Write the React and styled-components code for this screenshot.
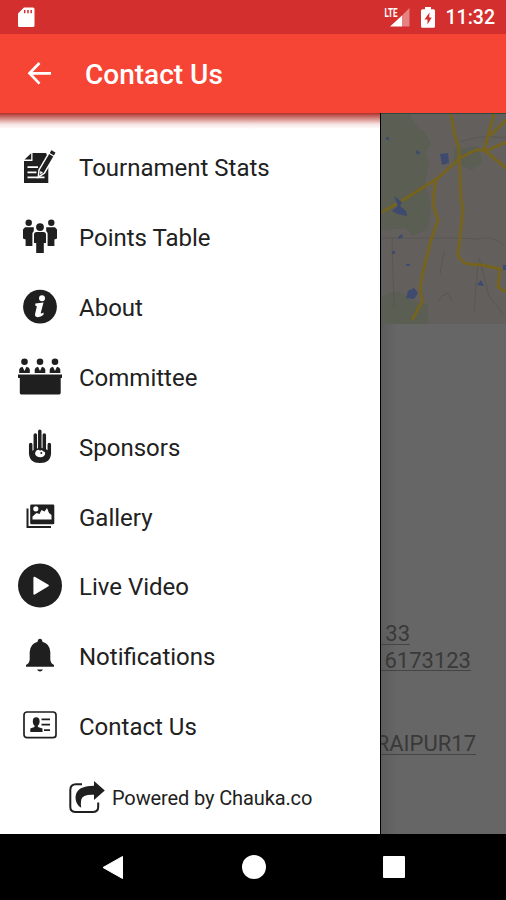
import React from "react";
import styled, { createGlobalStyle } from "styled-components";

const GlobalStyle = createGlobalStyle`
  * {
    box-sizing: border-box;
  }
  body {
    margin: 0;
    background: #000;
    font-family: Roboto, "Noto Sans", sans-serif;
  }
`;

const StatsIcon = () => (
  <svg viewBox="0 0 44 44">
    <path d="M14.500 8H28l2.300 5V38H6V16h8.500z" />
    <path d="M6.500 14.500l6.700-6.300v6.300z" />
    <path d="M9.500 22.200h10.500M9.500 27.300h9M9.500 32.300h17" stroke="#fff" strokeWidth="1.800" />
    <path
      d="M33.200 4.200l5.300 3.200-12 20.600-6.200 4.200.700-7.300z"
      stroke="#fff"
      strokeWidth="1.500"
    />
    <path d="M31 8.300l5.400 3.200" stroke="#fff" strokeWidth="1.200" />
    <path d="M22.300 26l2.700 1.600-3 2z" fill="#fff" />
  </svg>
);

const PeopleIcon = () => (
  <svg viewBox="0 0 44 44">
    <circle cx="10.700" cy="7.800" r="3.200" />
    <circle cx="33.300" cy="7.800" r="3.200" />
    <path d="M7 12.300h8.800v3.700l-1.400 2V31H7.600V24.500L5 23.500V14.500z" />
    <path d="M37 12.300h-8.800v3.700l1.400 2V31h6.800V24.500l2.600-1V14.500z" />
    <circle cx="22" cy="12.100" r="3.900" />
    <path d="M18.500 17h7q2.500 0 2.500 2.500V28h-2.200v10h-7.600V28H16v-8.500q0-2.500 2.500-2.500z" />
  </svg>
);

const InfoIcon = () => (
  <svg viewBox="0 0 44 44">
    <circle cx="22" cy="21.700" r="16.900" />
    <circle cx="24" cy="13.200" r="3" fill="#fff" />
    <path
      d="M17.300 18.400l8.200-.8-2.700 10.200q-.3 1.700 2.700-.2v2.200q-2.700 2.500-5.900 2.400-3.100-.2-2.500-3.400l1.700-7.100q.2-1-1.500-1z"
      fill="#fff"
    />
  </svg>
);

const CommitteeIcon = () => (
  <svg viewBox="0 0 44 44">
    {[6.5, 22, 37].map((x) => (
      <g key={x} transform={`translate(${x} 0)`}>
        <circle cx="0" cy="6.800" r="3.300" />
        <path d="M-5.300 18v-3.500q.3-2 3.300-2.800L0 16l2-4.300q3 .8 3.300 2.800V18z" />
      </g>
    ))}
    <path d="M0 19.600h44v3.400h-1.300V38q0 1.400-1.400 1.400H3.200Q1.800 39.400 1.800 38V23H0z" />
  </svg>
);

const HandIcon = () => (
  <svg viewBox="0 0 44 44">
    <path
      d="M12.700 19.500v9M17.300 10v18M21.800 6.200v20M26.300 10v18M31.300 19.500v9"
      fill="none"
      stroke="#1f1f1f"
      strokeWidth="3.500"
      strokeLinecap="round"
    />
    <path d="M11 27l5-2 5.600-2.500 6 1.500 5.400 3v1q0 10-11 10T11 28z" />
    <path d="M17 28.500q.5-3.500 4-3.800 1 1.600 2.500.2l3.700 2.600q0 4.600-5 4.800-4.200 0-5.200-3.800z" fill="#fff" />
    <circle cx="23.300" cy="28" r="1" />
  </svg>
);

const GalleryIcon = () => (
  <svg viewBox="0 0 44 44">
    <path d="M13.500 9.400H35q1.300 0 1.300 1.300V28q0 1.300-1.300 1.300H13.500q-1.300 0-1.300-1.300V10.700q0-1.300 1.300-1.300z" />
    <path d="M9.500 13.500V32H33" fill="none" stroke="#1f1f1f" strokeWidth="2" />
    <circle cx="17.800" cy="13.800" r="2.600" fill="#fff" />
    <path d="M14.500 24.500v-3l4-3.500 3 1 2-4 3 1.500 2.500-3.500 2 5 2.500 2v4.500z" fill="#fff" />
  </svg>
);

const PlayIcon = () => (
  <svg viewBox="0 0 44 44">
    <circle cx="22" cy="21.500" r="22" />
    <path
      d="M16.300 13.600v16.200L30 21.600z"
      fill="#fff"
      stroke="#fff"
      strokeWidth="1.800"
      strokeLinejoin="round"
    />
  </svg>
);

const BellIcon = () => (
  <svg viewBox="0 0 44 44">
    <path d="M22 4.800q2.200 0 2.400 3Q32 10 32.300 18v7.500q.3 4 3.700 5.500v1.800H8V31q3.400-1.500 3.700-5.500V18Q12 10 19.600 7.800q.2-3 2.400-3z" />
    <path d="M19 35.500h6q-1 2-3 2t-3-2z" />
  </svg>
);

const ContactIcon = () => (
  <svg viewBox="0 0 44 44">
    <rect
      x="6"
      y="8"
      width="32"
      height="25.700"
      rx="3"
      fill="none"
      stroke="#1f1f1f"
      strokeWidth="1.700"
    />
    <ellipse cx="18.200" cy="17.500" rx="3.400" ry="4.200" />
    <path d="M16.500 20h3.400v3l4.600 1.600V28H12.300v-3.400l4.200-1.600z" />
    <path d="M23.500 15.300h8.500M23.500 20.700h8.500M26 26.200h6" stroke="#1f1f1f" strokeWidth="1.800" />
  </svg>
);

const ShareIcon = () => (
  <svg width="36" height="34" viewBox="0 0 36 34" fill="#1f1f1f">
    <path
      d="M13 3.200H7Q1.300 3.200 1.300 9v17q0 5 5.700 5h16.500q5.700 0 5.700-5v-4.500"
      fill="none"
      stroke="#1f1f1f"
      strokeWidth="2"
    />
    <path d="M25 0l10.800 9.600L25 19v-5.200q-11.500-.6-12.800 5-.7 4 0 8Q6.300 23.500 6.500 16 7 4.800 25 4.700z" />
  </svg>
);

const RoadMap = () => (
  <svg width="124" height="210" viewBox="0 0 124 210">
    <rect width="124" height="210" fill="#625f5d" />
    <g fill="#5a5e53">
      <path d="M0 0h28q3 12 15 18l6 12-6 8 4 12-4 18 6 24-4 24-14 6-8-8-24 2z" />
      <path d="M0 184q14-14 28 2l18 4v20H0z" />
      <path d="M72 36l24-4 4 16-10 8-18-8z" />
    </g>
    <g fill="none" stroke="#595754" strokeWidth="1">
      <path d="M0 124h76l20 1q14-4 26 6M56 188l4-6 6-3 4 8M62 138l-4 22M97 144l10 38 14 18M96 148l-4 50M10 124l2 70M78 28q20-8 46-4" />
    </g>
    <g fill="none" stroke="#76641e" strokeWidth="3" strokeLinejoin="round">
      <path d="M0 98l18-10 38-24 22-20 16-8h12l18-8" />
      <path d="M69 0l4 22 4 12v10l1 18 1 24 2 8-4 40-1 6q2 8 10 10l14 1 18 4-2 18 8 5" />
      <path d="M54 64l-3 26 5 16-7 20-8 32-3 16 2 14-10 18" />
      <path d="M112 0l-10 36 22 18M124 6l-16 16" />
    </g>
    <g fill="#3e4a6e">
      <path d="M58 40l8-1 1 10-7 2z" />
      <path d="M12 82l8 6-2 4 6 5 1 5-9-2-6-3 6-5z" />
      <path d="M26 177l6-3 4 5-4 6-8-1z" />
      <path d="M95 171l4-5 3 6zM16 123l4-3 1 3-4 2zM34 36l4 2-1 3-3-2zM10 137h3v3h-3zM24 150h4v2h-4zM121 151h3v5h-3zM4 23h3v3H4z" />
    </g>
  </svg>
);

const menu = [
  { label: "Tournament Stats", icon: StatsIcon },
  { label: "Points Table", icon: PeopleIcon },
  { label: "About", icon: InfoIcon },
  { label: "Committee", icon: CommitteeIcon },
  { label: "Sponsors", icon: HandIcon },
  { label: "Gallery", icon: GalleryIcon },
  { label: "Live Video", icon: PlayIcon },
  { label: "Notifications", icon: BellIcon },
  { label: "Contact Us", icon: ContactIcon },
];

const App = () => {
  return (
    <Screen>
      <GlobalStyle />
      <StatusBar>
        <svg width="17" height="21" viewBox="0 0 17 21">
          <path d="M6 .5h9q1.500 0 1.500 1.500v16.500q0 1.500-1.500 1.500H1.500Q0 20 0 18.500V6.500z" fill="#fff" />
          <path d="M6.700 3v3.200M10 3v3.200M13.200 3v3.200" stroke="#d32f2f" strokeWidth="1.500" />
        </svg>
        <StatusIcons>
          <svg width="26" height="22" viewBox="0 0 26 22">
            <path d="M25.500 2v18.500h-8V10z" fill="#e58282" />
            <path d="M18 9.500v11H6z" fill="#fff" />
            <text x="0.500" y="10.500" textLength="13" lengthAdjust="spacingAndGlyphs" className="lte">
              LTE
            </text>
          </svg>
          <svg width="14" height="21" viewBox="0 0 14 21">
            <path d="M4 0h6v2.300h2.500Q14 2.300 14 3.800v15.500q0 1.500-1.500 1.500h-11Q0 20.800 0 19.300V3.800q0-1.500 1.500-1.500H4z" fill="#fff" />
            <path d="M8.500 5.500L3.500 12.500h3v5l4.300-7H8.200z" fill="#d32f2f" />
          </svg>
          <Clock>11:32</Clock>
        </StatusIcons>
      </StatusBar>
      <AppBar>
        <svg width="24" height="24" viewBox="0 0 24 24">
          <path d="M12.500 1L2.500 11.300l10 10.300M3 11.300h21" fill="none" stroke="#fff" strokeWidth="2.700" />
        </svg>
        <Title>Contact Us</Title>
      </AppBar>
      <Body>
        <Drawer>
          {menu.map(({ label, icon: Icon }) => (
            <MenuItem key={label}>
              <Icon />
              <Label>{label}</Label>
            </MenuItem>
          ))}
          <Footer>
            <ShareIcon />
            <span>Powered by Chauka.co</span>
          </Footer>
        </Drawer>
        <Page>
          <RoadMap />
          <Details>
            <Line $right={96}>33</Line>
            <Line $right={35}>6173123</Line>
            <Line $right={30} $top={57}>
              RAIPUR17
            </Line>
          </Details>
        </Page>
      </Body>
      <NavBar>
        <svg width="22" height="25" viewBox="0 0 22 25">
          <path d="M20.500 1.500v22L1 12.500z" fill="#fff" stroke="#fff" strokeLinejoin="round" />
        </svg>
        <Home />
        <Recent />
      </NavBar>
    </Screen>
  );
};

export default App;

const Screen = styled.div`
  width: 506px;
  height: 900px;
  display: flex;
  flex-direction: column;
  overflow: hidden;
`;

const StatusBar = styled.div`
  height: 34px;
  flex-shrink: 0;
  background: #d32f2f;
  display: flex;
  align-items: center;
  justify-content: space-between;
  padding: 0 11px 0 18px;
`;

const StatusIcons = styled.div`
  display: flex;
  align-items: center;
  .lte {
    font-size: 12.5px;
    font-weight: 700;
    fill: #fff;
  }
  svg + svg {
    margin-left: 11px;
  }
`;

const Clock = styled.div`
  margin-left: 11px;
  color: #fff;
  font-size: 19.5px;
  font-weight: 500;
  line-height: 34px;
  padding-top: 2px;
`;

const AppBar = styled.div`
  height: 79px;
  flex-shrink: 0;
  background: #f64435;
  display: flex;
  align-items: center;
  padding-left: 27px;
  gap: 34px;
`;

const Title = styled.div`
  color: #fff;
  font-size: 28px;
  font-weight: 500;
  line-height: 32px;
  padding-top: 2px;
`;

const Body = styled.div`
  flex: 1;
  min-height: 0;
  display: flex;
`;

const Drawer = styled.div`
  width: 381px;
  flex-shrink: 0;
  display: flex;
  flex-direction: column;
  padding-top: 19.4px;
  border-right: 1px solid #000;
  background: linear-gradient(
      #b0322a 0,
      #c0605a 3px,
      #dd9f9b 7px,
      #f6e3e2 11px,
      rgba(255, 255, 255, 0) 16px
    )
    #fff;
`;

const MenuItem = styled.div`
  height: 69.87px;
  display: flex;
  align-items: center;
  gap: 17px;
  padding-left: 18px;
  svg {
    width: 44px;
    height: 44px;
    fill: #1f1f1f;
    overflow: visible;
  }
`;

const Label = styled.span`
  padding-top: 2px;
  color: #212121;
  font-size: 24px;
`;

const Footer = styled.div`
  flex: 1;
  display: flex;
  align-items: center;
  gap: 7px;
  padding-left: 69px;
  color: #212121;
  font-size: 20px;
  letter-spacing: -0.12px;
`;

const Page = styled.div`
  flex: 1;
  min-width: 0;
  overflow: hidden;
  display: flex;
  flex-direction: column;
  background: linear-gradient(90deg, #5c5c5c, #666 16px);
  border-top: 1px solid #29493f;
  svg {
    flex-shrink: 0;
    align-self: flex-end;
  }
`;

const Details = styled.div`
  display: flex;
  flex-direction: column;
  align-items: flex-end;
  padding-top: 297px;
  color: #393939;
  font-size: 22px;
`;

const Line = styled.div`
  margin-top: ${(props) => props.$top || 0}px;
  margin-right: ${(props) => props.$right}px;
  margin-bottom: 3px;
  padding-left: 5px;
  height: 23.5px;
  line-height: 26px;
  white-space: nowrap;
  border-bottom: 1px solid #444;
`;

const NavBar = styled.div`
  height: 66px;
  flex-shrink: 0;
  background: #000;
  display: flex;
  align-items: center;
  justify-content: space-between;
  padding: 0 101px 0 102px;
`;

const Home = styled.div`
  width: 24px;
  height: 24px;
  border-radius: 50%;
  background: #fff;
`;

const Recent = styled.div`
  width: 22px;
  height: 22px;
  border-radius: 1px;
  background: #fff;
`;
